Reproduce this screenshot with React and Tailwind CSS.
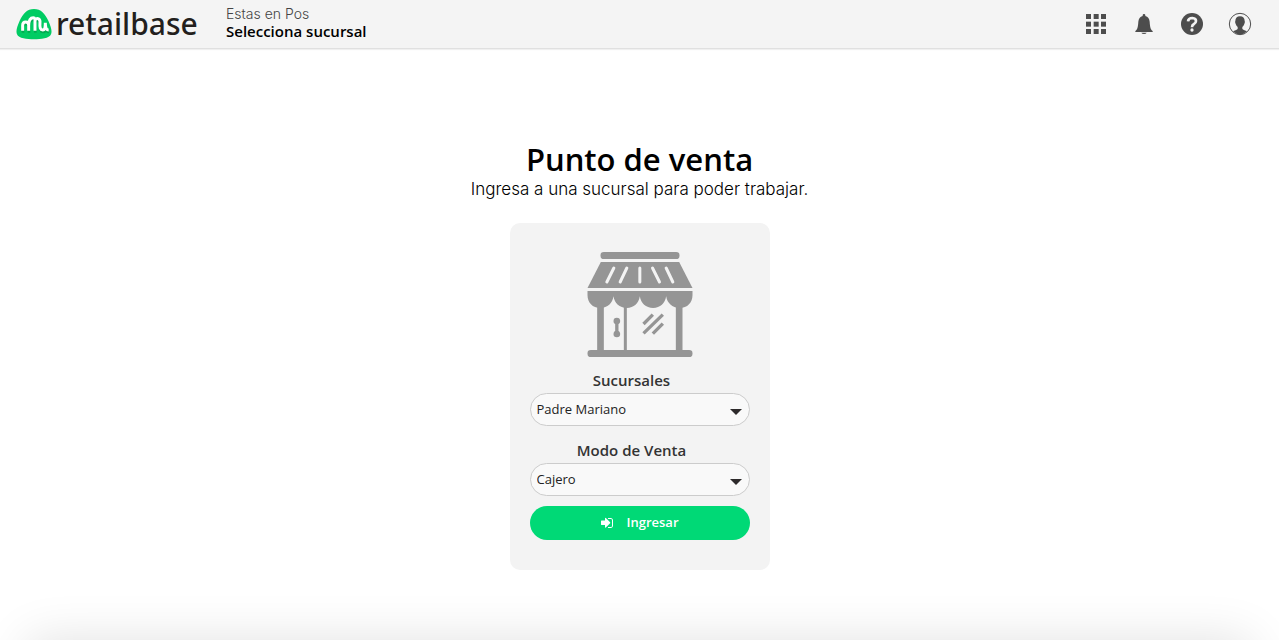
import React, { useState } from 'react';

const BRANCHES = ['Padre Mariano'];
const MODES = ['Cajero'];

function Logo() {
  return (
    <a href="#" className="flex items-center gap-1 w-[182px] text-[#231f1d]">
      <svg className="w-9 h-8 flex-shrink-0" viewBox="0 0 108 96" fill="none">
        <path
          d="M54 3C75 3 87 17 97 38C105 56 109 70 105 79C100 92 75 94 54 94C33 94 8 92 3 79C-1 70 3 56 11 38C21 17 33 3 54 3Z"
          fill="#00cc63"
        />
        <path
          d="M20 68V52Q20 42 29 42Q38 42 38 52V68M38 54C38 36 44 29 52 29C58 29 57 36 57 44V68M57 36C64 28 73 32 72 44C71 60 73 66 80 66C88 66 88 58 88 44C88 60 90 66 98 66"
          transform="translate(1 6)"
          stroke="#00ab50"
          strokeWidth="8"
        />
        <path
          d="M20 68V52Q20 42 29 42Q38 42 38 52V68M38 54C38 36 44 29 52 29C58 29 57 36 57 44V68M57 36C64 28 73 32 72 44C71 60 73 66 80 66C88 66 88 58 88 44C88 60 90 66 98 66"
          stroke="#fff"
          strokeWidth="9"
        />
      </svg>
      <span className="font-['Noto_Sans','Open_Sans',sans-serif] font-medium text-[30px] leading-8">retailbase</span>
    </a>
  );
}

function GridIcon() {
  return (
    <svg className="w-5 h-5" viewBox="0 0 60 60" fill="currentColor">
      {[0, 23, 45].map((y) =>
        [0, 23, 45].map((x) => <rect key={`${x}-${y}`} x={x} y={y} width="15" height="15" />)
      )}
    </svg>
  );
}

function BellIcon() {
  return (
    <svg className="w-5 h-5" viewBox="0 0 60 60" fill="currentColor">
      <path d="M30 0Q34 0 34 4V6Q46 10 47 23C48 40 50 46 56 51V54H4V51C10 46 12 40 13 23Q14 10 26 6V4Q26 0 30 0Z" />
      <path d="M22 56H38Q36 60 30 60Q24 60 22 56Z" />
    </svg>
  );
}

function HelpIcon() {
  return (
    <svg className="w-6 h-6" viewBox="0 0 72 72" fill="none">
      <circle cx="36" cy="36" r="33" fill="currentColor" />
      <path d="M24 28Q25 18 37 18Q48 19 48 27Q48 32 42 36Q36 39 36 46" stroke="#f4f4f4" strokeWidth="8" />
      <circle cx="36" cy="54" r="5" fill="#f4f4f4" />
    </svg>
  );
}

function UserIcon() {
  return (
    <svg className="w-6 h-6" viewBox="0 0 72 72" fill="none">
      <circle cx="36" cy="36" r="32" stroke="currentColor" strokeWidth="3" />
      <path
        d="M36 13C45 13 50 18 50 27Q52 29 49 36Q47 42 43 45V51Q45 54 57 58Q48 67 36 67Q24 67 15 58Q27 54 29 51V45Q25 42 23 36Q20 29 22 27C22 18 27 13 36 13Z"
        fill="currentColor"
      />
    </svg>
  );
}

function StoreIcon() {
  return (
    <svg className="w-[106px] h-[105px]" viewBox="38 36 315 315" fill="#959595">
      <rect x="77" y="36" width="237" height="21" rx="10" />
      <path d="M78 66H313L353 144H38Z" />
      <path
        d="M117 84L96 126M156 84L136 126M195 84V126M233 84L254 126M274 84L294 126"
        stroke="#f3f3f3"
        strokeWidth="9"
        strokeLinecap="round"
      />
      <path d="M38 153H353V165C353 188 338 204 314 204C292 204 277 189 274 169C271 190 256 204 235 204C213 204 198 190 195 169C192 190 177 204 156 204C134 204 119 190 116 169C113 190 98 204 77 204C53 204 38 188 38 165Z" />
      <path d="M67 195H87V335H67ZM147 195H156V335H147ZM303 195H323V335H303Z" />
      <rect x="38" y="330" width="315" height="21" rx="10" />
      <circle cx="126" cy="243" r="10" />
      <circle cx="126" cy="282" r="10" />
      <path d="M121 243H131V282H121Z" />
      <path d="M206 252L234 224M206 280L264 224M234 281L264 251" stroke="#959595" strokeWidth="10" />
    </svg>
  );
}

function SignInIcon() {
  return (
    <svg className="w-[14px] h-[14px]" viewBox="0 0 1792 1792" fill="currentColor">
      <path d="M1312 896q0 26-19 45l-544 544q-19 19-45 19t-45-19-19-45v-288H192q-26 0-45-19t-19-45V640q0-26 19-45t45-19h448V288q0-26 19-45t45-19 45 19l544 544q19 19 19 45zM1664 544v704q0 119-84.500 203.500T1376 1536h-320q-13 0-22.500-9.500T1024 1504q0-4-1-20t-.5-26.500 3-23.500 10-19.500 20.500-6.500h320q66 0 113-47t47-113V544q0-66-47-113t-113-47h-312l-11.500-1-11.500-3-8-5.500-7-9-2-13.500q0-4-1-20t-.5-26.500 3-23.500 10-19.500 20.500-6.500h320q119 0 203.500 84.500T1664 544z" />
    </svg>
  );
}

function SelectBox({ id, value, onChange, options }) {
  return (
    <div className="relative">
      <select
        id={id}
        value={value}
        onChange={(e) => onChange(e.target.value)}
        className="block w-full h-[33px] appearance-none rounded-full border border-[#cccccc] bg-[#f9f9f9] pl-[6px] pr-8 text-[13px] text-[#222222] outline-none"
      >
        {options.map((o) => (
          <option key={o} value={o}>{o}</option>
        ))}
      </select>
      <svg className="pointer-events-none absolute right-2 top-4 w-3 h-[6px]" viewBox="0 0 12 6" fill="#2d2a2b">
        <path d="M0 0H12L6 6Z" />
      </svg>
    </div>
  );
}

export default function App() {
  const [branch, setBranch] = useState(BRANCHES[0]);
  const [mode, setMode] = useState(MODES[0]);

  return (
    <div className="min-h-screen bg-white flex flex-col font-['Open_Sans','Noto_Sans',sans-serif] text-black">
      {/* Top bar */}
      <header className="flex items-center h-[49px] bg-[#f4f4f4] border-b border-[#e0e0e0] shadow-[0_1px_1px_rgba(0,0,0,0.06)] pl-4 pr-[27px]">
        <Logo />
        <div className="ml-7 mb-[2px]">
          <p className="font-['Inter','Liberation_Sans',sans-serif] font-light text-[14px] leading-4 text-[#444444]">Estas en Pos</p>
          <p className="text-[15px] leading-[18px] font-semibold">Selecciona sucursal</p>
        </div>
        <nav className="ml-auto flex items-center gap-6 text-[#4d4d4d]">
          <button aria-label="Aplicaciones" className="w-6 h-6 flex items-center justify-center"><GridIcon /></button>
          <button aria-label="Notificaciones" className="w-6 h-6 flex items-center justify-center"><BellIcon /></button>
          <button aria-label="Ayuda" className="w-6 h-6 flex items-center justify-center"><HelpIcon /></button>
          <button aria-label="Cuenta" className="w-6 h-6 flex items-center justify-center"><UserIcon /></button>
        </nav>
      </header>

      <main className="flex-1 flex flex-col items-center pt-[90px]">
        <h1 className="text-[31px] leading-10 font-semibold">Punto de venta</h1>
        <p className="font-['Inter','Liberation_Sans',sans-serif] font-light text-[17px] leading-5">Ingresa a una sucursal para poder trabajar.</p>

        {/* Branch card */}
        <form
          onSubmit={(e) => e.preventDefault()}
          className="mt-6 w-[260px] rounded-[10px] bg-[#f3f3f3] px-5 pt-[29px] pb-[30px] flex flex-col"
        >
          <div className="flex justify-center">
            <StoreIcon />
          </div>
          <label htmlFor="branch" className="mt-[11px] mb-px pr-4 text-center text-[15px] leading-6 font-semibold text-[#333333]">
            Sucursales
          </label>
          <SelectBox id="branch" value={branch} onChange={setBranch} options={BRANCHES} />
          <label htmlFor="mode" className="mt-3 mb-px pr-4 text-center text-[15px] leading-6 font-semibold text-[#333333]">
            Modo de Venta
          </label>
          <SelectBox id="mode" value={mode} onChange={setMode} options={MODES} />
          <button
            type="submit"
            className="mt-[10px] h-[34px] rounded-full bg-[#00d976] text-white text-[13px] font-semibold flex items-center justify-center gap-3"
          >
            <SignInIcon />
            Ingresar
          </button>
        </form>
      </main>

      {/* Shadow of the bottom edge */}
      <div className="h-14 overflow-hidden px-7 pt-14">
        <div className="h-24 shadow-[0_0_50px_rgba(0,0,0,0.12)]" />
      </div>
    </div>
  );
}
